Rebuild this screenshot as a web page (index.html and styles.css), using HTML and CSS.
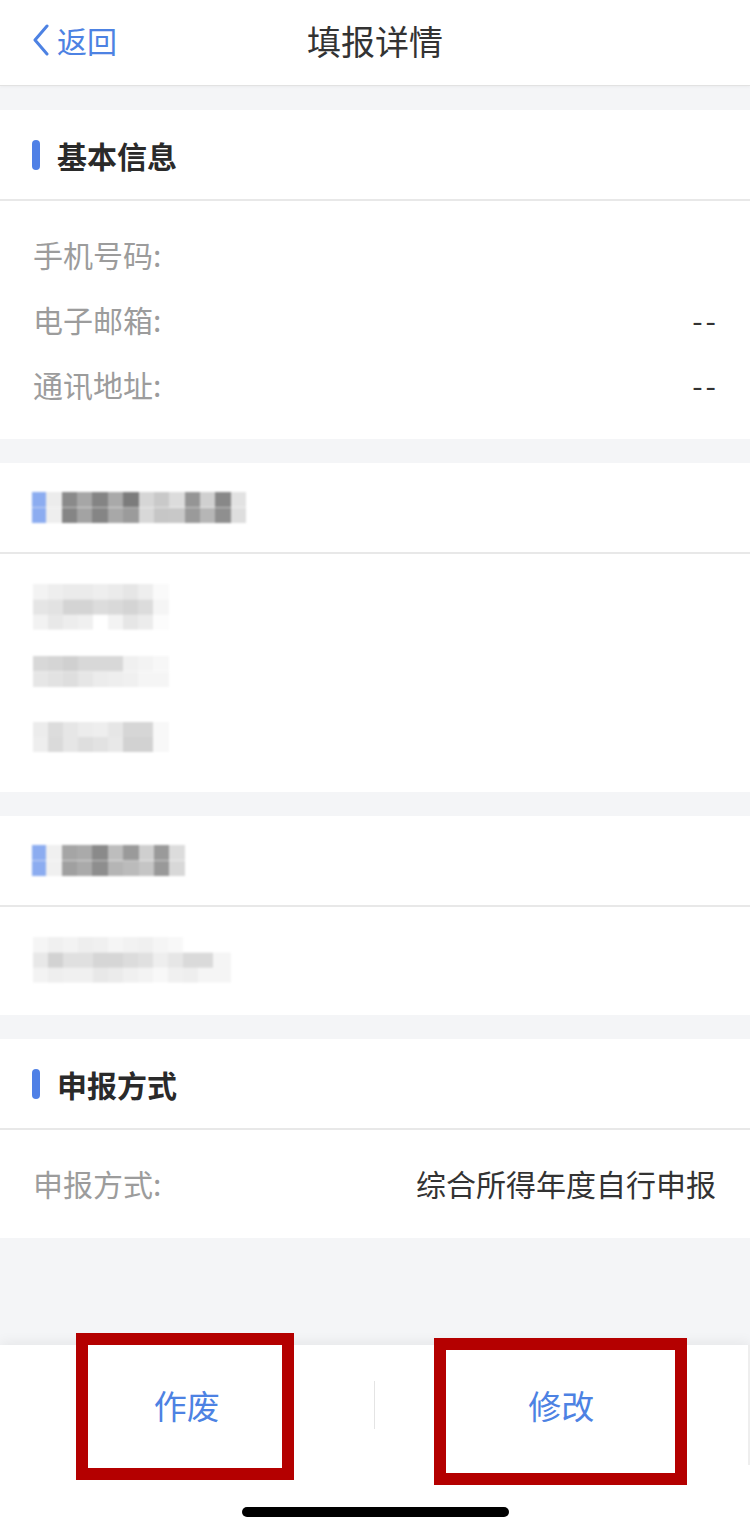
FILE: index.html
```html
<!DOCTYPE html>
<html lang="zh-CN">
<head>
    <meta charset="UTF-8">
    <meta name="viewport" content="width=device-width, initial-scale=1.0">
    <title>填报详情</title>
    <link rel="stylesheet" href="styles.css">
</head>
<body>
    <div class="page">
        <header class="nav">
            <a class="nav-back">
                <svg class="nav-chevron" width="18" height="32" viewBox="0 0 18 32">
                    <path d="M15 2 L3 16 L15 30" fill="none" stroke="#4d82e3" stroke-width="3" stroke-linecap="round" stroke-linejoin="round"/>
                </svg>
                <span>返回</span>
            </a>
            <h1 class="nav-title">填报详情</h1>
            <span></span>
        </header>

        <main class="content">
            <section class="card">
                <div class="card-head">
                    <span class="card-bar"></span>
                    <h2 class="card-title">基本信息</h2>
                </div>
                <div class="card-body">
                    <div class="row"><span class="row-label">手机号码:</span><span class="row-value"></span></div>
                    <div class="row"><span class="row-label">电子邮箱:</span><span class="row-value row-empty">--</span></div>
                    <div class="row"><span class="row-label">通讯地址:</span><span class="row-value row-empty">--</span></div>
                </div>
            </section>

            <!-- blurred (mosaic) sections -->
            <section class="card">
                <div class="card-head">
                    <span class="mosaic mosaic-head-a"></span>
                </div>
                <div class="card-body">
                    <div class="row"><span class="mosaic mosaic-row-a"></span></div>
                    <div class="row"><span class="mosaic mosaic-row-b"></span></div>
                    <div class="row"><span class="mosaic mosaic-row-c"></span></div>
                </div>
            </section>

            <section class="card">
                <div class="card-head">
                    <span class="mosaic mosaic-head-b"></span>
                </div>
                <div class="card-body">
                    <div class="row"><span class="mosaic mosaic-row-d"></span></div>
                </div>
            </section>

            <section class="card">
                <div class="card-head">
                    <span class="card-bar"></span>
                    <h2 class="card-title">申报方式</h2>
                </div>
                <div class="card-body">
                    <div class="row"><span class="row-label">申报方式:</span><span class="row-value">综合所得年度自行申报</span></div>
                </div>
            </section>
        </main>

        <footer class="actions">
            <div class="action-row">
                <button class="action">作废</button>
                <span class="action-sep"></span>
                <button class="action">修改</button>
            </div>
            <div class="home-bar"></div>
            <span class="mark mark-void"></span>
            <span class="mark mark-edit"></span>
        </footer>
    </div>
</body>
</html>
```

FILE: styles.css
```css
body {
    margin: 0;
    background-color: #f4f5f7;
    font-family: "Noto Sans CJK SC", "Noto Sans", sans-serif;
    color: #333;
}
.page {
    display: flex;
    flex-direction: column;
    min-height: 100vh;
}
.nav {
    display: grid;
    grid-template-columns: 1fr auto 1fr;
    align-items: center;
    box-sizing: border-box;
    height: 86px;
    padding-bottom: 5px;
    background: #fff;
    border-bottom: 1px solid #e2e2e2;
    box-shadow: 0 1px 3px rgba(0,0,0,0.04);
}
.nav-back {
    display: flex;
    align-items: center;
    gap: 7px;
    padding-left: 32px;
    color: #4d82e3;
    font-size: 30px;
}
.nav-title {
    margin: 0;
    font-size: 34px;
    font-weight: 400;
    color: #333;
}
.content {
    flex: 1;
}
.card {
    margin-top: 24px;
    background: #fff;
}
.card-head {
    display: flex;
    align-items: center;
    gap: 17px;
    height: 89px;
    padding-left: 32px;
    border-bottom: 2px solid #e8e8e8;
}
.card-bar {
    width: 8px;
    height: 30px;
    border-radius: 4px;
    background: #4f80e6;
}
.card-title {
    margin: 0;
    font-size: 30px;
    font-weight: 700;
    color: #2a2a2a;
}
.card-body {
    padding: 20px 34px 23px 33px;
}
.row {
    display: flex;
    justify-content: space-between;
    align-items: center;
    height: 65px;
    font-size: 30px;
}
.row-label {
    color: #9c9c9c;
}
.row-value {
    color: #333;
}
.row-empty {
    letter-spacing: 3px;
    margin-right: -3px;
}

/* pixelated placeholders */
.mosaic {
    display: block;
    background-repeat: no-repeat;
    filter: blur(1px);
}
.mosaic-head-a {
    width: 214px;
    height: 31px;
    background-image:
        linear-gradient(to right, #8cacf0 0 14px, #ececec 14px 30px, #8a8a8a 30px 45px, #a6a6a6 45px 60px, #848484 60px 76px, #a9a9a9 76px 91px, #7c7c7c 91px 107px, #d6d6d6 107px 122px, #c9c9c9 122px 137px, #dcdcdc 137px 153px, #959595 153px 168px, #d0d0d0 168px 183px, #888 183px 199px, #e2e2e2 199px 214px),
        linear-gradient(to right, #8cacf0 0 14px, #eee 14px 30px, #858585 30px 45px, #a3a3a3 45px 60px, #858585 60px 76px, #a8a8a8 76px 91px, #9b9b9b 91px 107px, #d8d8d8 107px 122px, #c6c6c6 122px 137px, #c8c8c8 137px 153px, #9a9a9a 153px 168px, #b6b6b6 168px 183px, #8f8f8f 183px 199px, #dedede 199px 214px);
    background-size: 100% 50%;
    background-position: top, bottom;
}
.mosaic-head-b {
    width: 153px;
    height: 31px;
    background-image:
        linear-gradient(to right, #8cacf0 0 14px, #f0f0f0 14px 30px, #a5a5a5 30px 45px, #aaa 45px 60px, #8a8a8a 60px 76px, #bdbdbd 76px 91px, #9a9a9a 91px 107px, #cfcfcf 107px 122px, #9a9a9a 122px 137px, #dcdcdc 137px 153px),
        linear-gradient(to right, #8cacf0 0 14px, #f0f0f0 14px 30px, #a0a0a0 30px 45px, #aaa 45px 60px, #8e8e8e 60px 76px, #b5b5b5 76px 91px, #bbb 91px 107px, #c5c5c5 107px 122px, #999 122px 137px, #d8d8d8 137px 153px);
    background-size: 100% 50%;
    background-position: top, bottom;
}
.mosaic-row-a {
    width: 136px;
    height: 46px;
    background-image:
        linear-gradient(to right, #f3f3f3 0 15px, #eee 15px 30px, #ebebeb 30px 60px, #eee 60px 75px, #ebebeb 75px 90px, #e6e6e6 90px 105px, #eee 105px 120px, #fafafa 120px 136px),
        linear-gradient(to right, #e5e5e5 0 15px, #e2e2e2 15px 30px, #d4d4d4 30px 60px, #dcdcdc 60px 75px, #d9d9d9 75px 90px, #d4d4d4 90px 105px, #dcdcdc 105px 120px, #f5f5f5 120px 136px),
        linear-gradient(to right, #f2f2f2 0 15px, #e8e8e8 15px 30px, #ededed 30px 45px, #f0f0f0 45px 60px, #fff 60px 75px, #f3f3f3 75px 90px, #e6e6e6 90px 105px, #ececec 105px 120px, #fcfcfc 120px 136px);
    background-size: 100% 34%;
    background-position: top, center, bottom;
}
.mosaic-row-b {
    width: 136px;
    height: 31px;
    background-image:
        linear-gradient(to right, #d8d8d8 0 15px, #d5d5d5 15px 30px, #d0d0d0 30px 45px, #d8d8d8 45px 60px, #d8d8d8 60px 90px, #f0f0f0 90px 105px, #f3f3f3 105px 120px, #f7f7f7 120px 136px),
        linear-gradient(to right, #e6e6e6 0 15px, #e2e2e2 15px 30px, #dedede 30px 45px, #e6e6e6 45px 60px, #ececec 60px 75px, #eee 75px 90px, #f0f0f0 90px 105px, #f5f5f5 105px 136px);
    background-size: 100% 50%;
    background-position: top, bottom;
}
.mosaic-row-c {
    width: 136px;
    height: 30px;
    background-image:
        linear-gradient(to right, #ececec 0 15px, #dcdcdc 15px 30px, #e6e6e6 30px 45px, #ececec 45px 60px, #eee 60px 75px, #e6e6e6 75px 90px, #d6d6d6 90px 120px, #f8f8f8 120px 136px),
        linear-gradient(to right, #eee 0 15px, #dadada 15px 30px, #e6e6e6 30px 45px, #dedede 45px 60px, #e2e2e2 60px 75px, #e8e8e8 75px 90px, #d2d2d2 90px 120px, #f8f8f8 120px 136px);
    background-size: 100% 50%;
    background-position: top, bottom;
}
.mosaic-row-d {
    width: 198px;
    height: 46px;
    background-image:
        linear-gradient(to right, #f5f5f5 0 15px, #f0f0f0 15px 30px, #f3f3f3 30px 45px, #eee 45px 60px, #f0f0f0 60px 75px, #f5f5f5 75px 90px, #f2f2f2 90px 105px, #f0f0f0 105px 120px, #f5f5f5 120px 135px, #f8f8f8 135px 150px, #fff 150px 198px),
        linear-gradient(to right, #e8e8e8 0 15px, #d2d2d2 15px 30px, #e0e0e0 30px 60px, #d6d6d6 60px 90px, #dcdcdc 90px 105px, #e0e0e0 105px 120px, #eee 120px 135px, #e6e6e6 135px 150px, #dadada 150px 180px, #f5f5f5 180px 198px),
        linear-gradient(to right, #f3f3f3 0 15px, #eee 15px 30px, #f0f0f0 30px 60px, #e8e8e8 60px 75px, #ebebeb 75px 90px, #f0f0f0 90px 105px, #f3f3f3 105px 120px, #f8f8f8 120px 135px, #f0f0f0 135px 150px, #eee 150px 165px, #f5f5f5 165px 198px);
    background-size: 100% 34%;
    background-position: top, center, bottom;
}

/* bottom action bar */
.actions {
    position: relative;
    height: 187px;
    background: #fff;
    box-shadow: 0 -3px 12px rgba(0,0,0,0.06);
}
.action-row {
    display: flex;
    align-items: center;
    height: 120px;
    border-right: 2px solid #eee;
}
.action {
    flex: 1;
    height: 100%;
    border: none;
    background: none;
    font-family: inherit;
    font-size: 33px;
    color: #4d82e3;
}
.action-sep {
    width: 1px;
    height: 48px;
    background: #e4e4e4;
}
.home-bar {
    width: 267px;
    height: 10px;
    margin: 42px auto 0;
    border-radius: 5px;
    background: #000;
}
.mark {
    position: absolute;
    box-sizing: border-box;
    border: 12px solid #b40000;
}
.mark-void {
    left: 76px;
    top: -12px;
    width: 218px;
    height: 147px;
}
.mark-edit {
    left: 434px;
    top: -7px;
    width: 253px;
    height: 147px;
}
```
